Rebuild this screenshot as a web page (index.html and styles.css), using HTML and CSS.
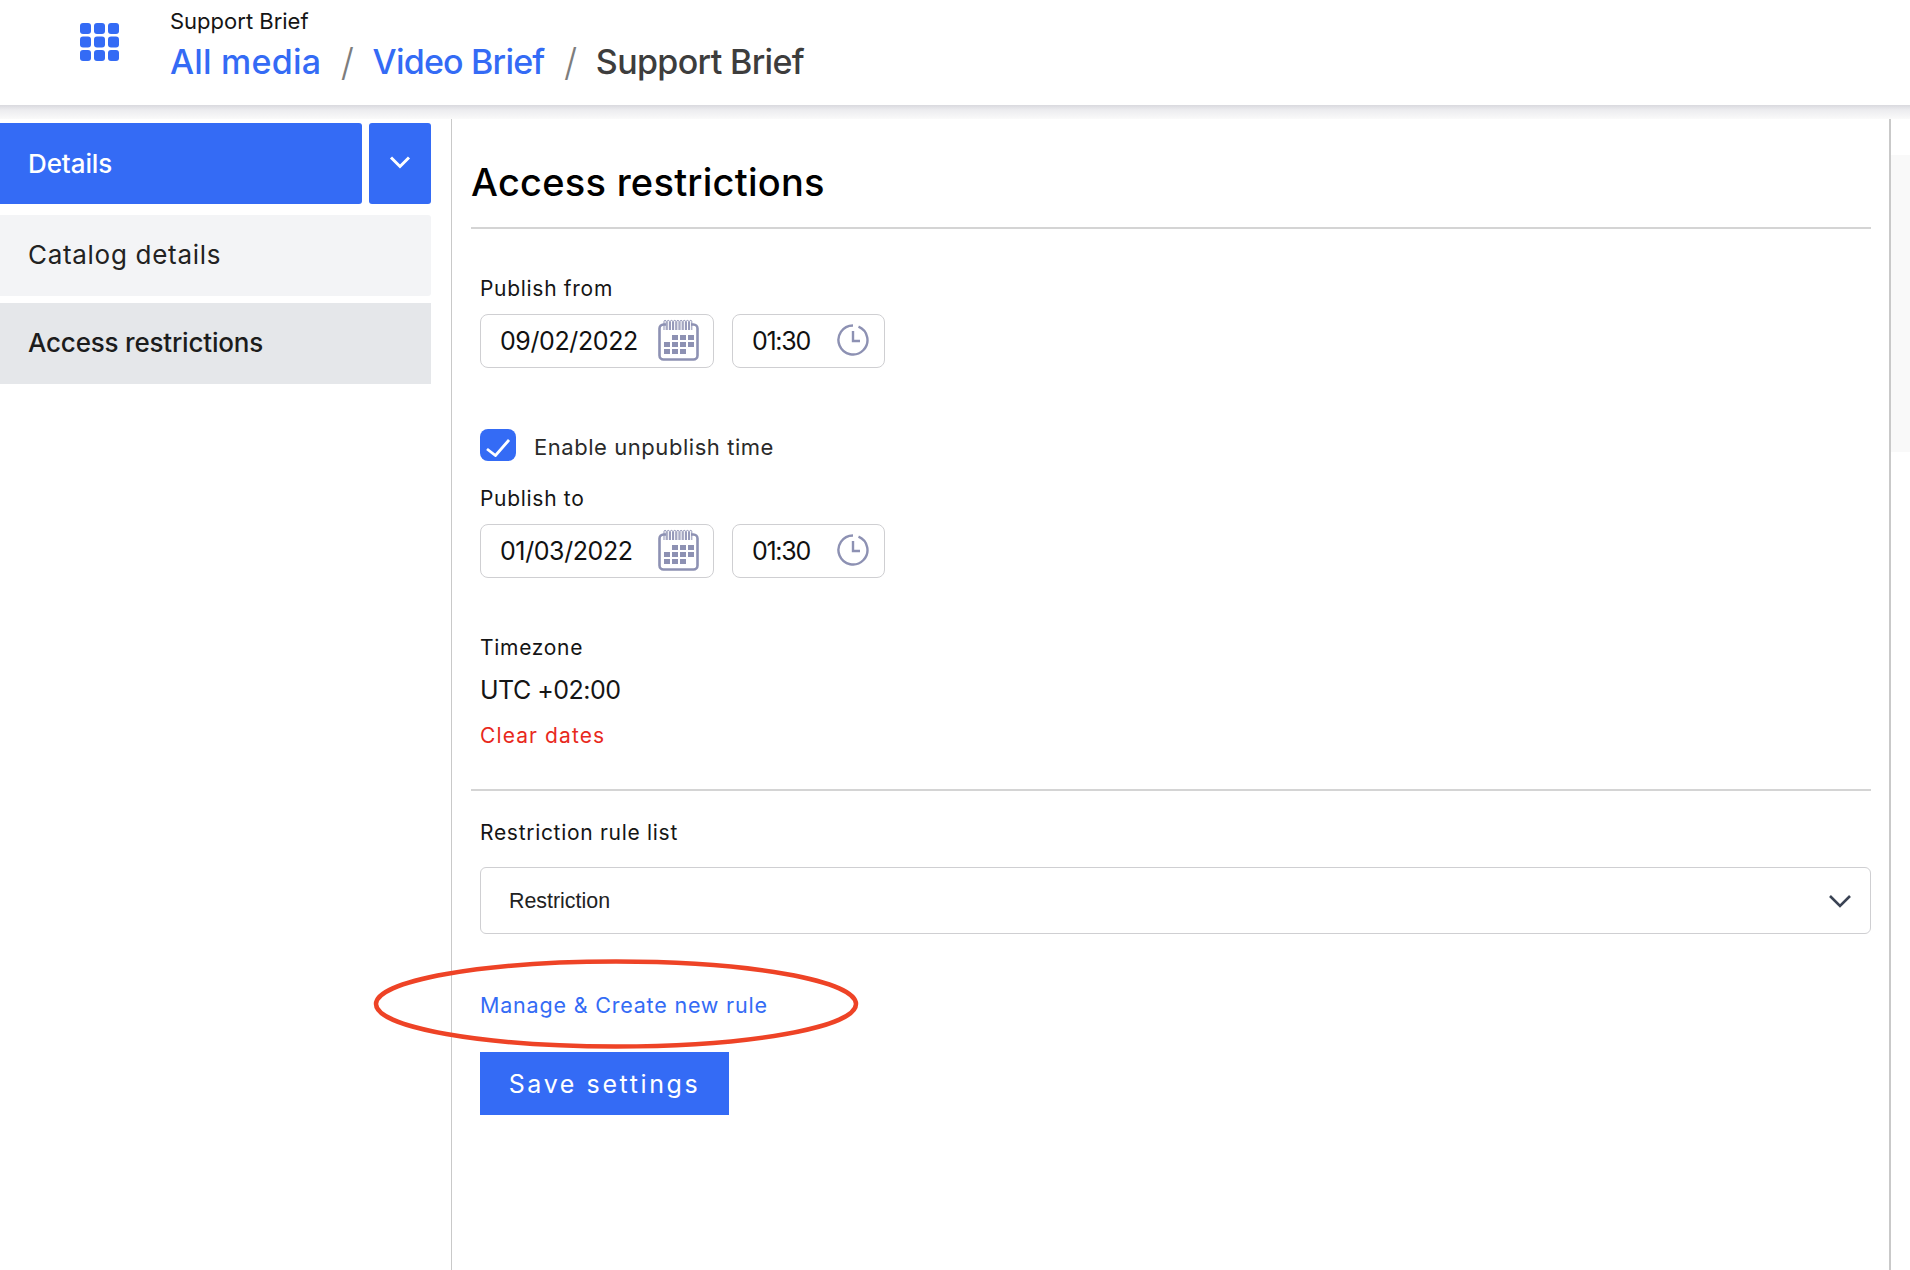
FILE: index.html
```html
<!DOCTYPE html>
<html lang="en">
<head>
<meta charset="utf-8">
<title>Access restrictions</title>
<link rel="stylesheet" href="styles.css">
</head>
<body>
<svg class="defs" width="0" height="0" aria-hidden="true">
  <symbol id="cal" viewBox="0 0 41 42">
    <path d="M8 5.5H5.5a4 4 0 0 0-4 4v27a4 4 0 0 0 4 4h30a4 4 0 0 0 4-4v-27a4 4 0 0 0-4-4H33" fill="none" stroke="#8d91b3" stroke-width="2.6"/>
    <path d="M6 11V2.5a1.1 1.1 0 0 1 2.2 0V11M9.200 11V2.500a1.100 1.100 0 0 1 2.200 0V11M12.400 11V2.500a1.100 1.100 0 0 1 2.200 0V11M15.600 11V2.500a1.100 1.100 0 0 1 2.200 0V11M18.800 11V2.500a1.100 1.100 0 0 1 2.200 0V11M22 11V2.500a1.100 1.100 0 0 1 2.200 0V11M25.200 11V2.500a1.100 1.100 0 0 1 2.200 0V11M28.400 11V2.500a1.100 1.100 0 0 1 2.200 0V11M31.600 11V2.500a1.100 1.100 0 0 1 2.200 0V11" stroke="#8d91b3" stroke-width="1" fill="none"/>
    <g fill="#8d91b3">
      <rect x="14" y="16" width="6" height="5"/><rect x="22" y="16" width="6" height="5"/><rect x="30" y="16" width="6" height="5"/>
      <rect x="6" y="23" width="6" height="5"/><rect x="14" y="23" width="6" height="5"/><rect x="22" y="23" width="6" height="5"/><rect x="30" y="23" width="6" height="5"/>
      <rect x="6" y="30" width="6" height="5"/><rect x="14" y="30" width="6" height="5"/><rect x="22" y="30" width="6" height="5"/>
    </g>
  </symbol>
  <symbol id="clock" viewBox="0 0 32 32">
    <path d="M21.500 2.600A14.500 14.500 0 1 1 16 1.500" fill="none" stroke="#8d91b3" stroke-width="2.4"/>
    <path d="M16 7v10h7" fill="none" stroke="#8d91b3" stroke-width="2.4"/>
  </symbol>
</svg>

<header class="topbar">
  <svg class="apps" viewBox="0 0 39 38" aria-hidden="true">
    <g fill="#346bf5">
      <rect x="0" y="0" width="11" height="11" rx="3"/><rect x="14" y="0" width="11" height="11" rx="3"/><rect x="28" y="0" width="11" height="11" rx="3"/>
      <rect x="0" y="13.500" width="11" height="11" rx="3"/><rect x="14" y="13.500" width="11" height="11" rx="3"/><rect x="28" y="13.500" width="11" height="11" rx="3"/>
      <rect x="0" y="27" width="11" height="11" rx="3"/><rect x="14" y="27" width="11" height="11" rx="3"/><rect x="28" y="27" width="11" height="11" rx="3"/>
    </g>
  </svg>
  <div class="titles">
    <div class="page-name">Support Brief</div>
    <nav class="crumbs">
      <a class="crumb-link crumb-first">All media</a>
      <span class="crumb-sep">/</span>
      <a class="crumb-link">Video Brief</a>
      <span class="crumb-sep">/</span>
      <span class="crumb-current">Support Brief</span>
    </nav>
  </div>
</header>
<div class="shade"></div>

<div class="body-row">
  <aside class="sidebar">
    <div class="side-head">
      <div class="side-main">Details</div>
      <div class="side-toggle">
        <svg width="22" height="14" viewBox="0 0 22 14" aria-hidden="true"><path d="M2 2.500l9 9 9-9" fill="none" stroke="#fff" stroke-width="3"/></svg>
      </div>
    </div>
    <div class="side-item">Catalog details</div>
    <div class="side-item side-item-active">Access restrictions</div>
  </aside>

  <main class="content">
    <h1 class="heading">Access restrictions</h1>
    <section class="dates">
      <label class="label label-from">Publish from</label>
      <div class="field-row">
        <div class="field field-date"><span>09/02/2022</span><svg class="ico-cal"><use href="#cal"/></svg></div>
        <div class="field field-time"><span>01:30</span><svg class="ico-clock"><use href="#clock"/></svg></div>
      </div>
      <div class="check-row">
        <span class="check"><svg width="24" height="24" viewBox="0 0 24 24" aria-hidden="true"><path d="M1 16l8.500 6.500L23 7" fill="none" stroke="#fff" stroke-width="2.800"/></svg></span>
        <span class="check-label">Enable unpublish time</span>
      </div>
      <label class="label label-to">Publish to</label>
      <div class="field-row">
        <div class="field field-date"><span>01/03/2022</span><svg class="ico-cal"><use href="#cal"/></svg></div>
        <div class="field field-time"><span>01:30</span><svg class="ico-clock"><use href="#clock"/></svg></div>
      </div>
      <div class="label label-tz">Timezone</div>
      <div class="tz-value">UTC +02:00</div>
      <a class="clear">Clear dates</a>
    </section>
    <section class="rules">
      <div class="label">Restriction rule list</div>
      <div class="select">
        <span>Restriction</span>
        <svg width="24" height="14" viewBox="0 0 24 14" aria-hidden="true"><path d="M2 2l10 10L22 2" fill="none" stroke="#3a4354" stroke-width="2.600"/></svg>
      </div>
      <a class="manage">Manage &amp; Create new rule</a>
      <button class="save" type="button">Save settings</button>
    </section>
  </main>
  <div class="rail"></div>
</div>

<svg class="circle" viewBox="0 0 486 92" aria-hidden="true"><ellipse cx="243" cy="46" rx="240" ry="42.500" fill="none" stroke="#ee4326" stroke-width="4.500"/></svg>
</body>
</html>
```
FILE: styles.css
```css
* { box-sizing: border-box; }
html, body { margin: 0; height: 1270px; overflow: hidden; background: #fff; }
body { font-family: "Inter", "Liberation Sans", sans-serif; color: #111; position: relative; display: flex; flex-direction: column; }
.defs { position: absolute; }

.topbar { height: 105px; display: flex; align-items: flex-start; padding-left: 80px; background: #fff; flex: none; }
.apps { width: 39px; height: 38px; margin-top: 23px; flex: none; }
.titles { margin-left: 51px; }
.page-name { font-size: 22px; line-height: 26px; margin-top: 8px; letter-spacing: 0; color: #151515; }
.crumbs { display: flex; align-items: center; font-size: 34px; font-weight: 500; line-height: 44px; margin-top: 6px; letter-spacing: -0.8px; }
.crumb-link { color: #346bf5; }
.crumb-first { letter-spacing: 0.2px; }
.crumb-current { color: #3d3d3d; letter-spacing: -0.65px; }
.crumb-sep { color: #7d7d7d; margin: 0 19.5px; font-size: 38px; font-weight: 300; }

.shade { height: 14px; flex: none; background: linear-gradient(#d9d9de, #ececef 35%, #fafafa); }

.body-row { flex: 1; display: flex; min-height: 0; }
.sidebar { width: 431px; flex: none; padding-top: 4px; margin-right: 20px; }
.side-head { display: flex; gap: 7px; margin-bottom: 11px; }
.side-main { width: 362px; height: 81px; background: #346bf5; color: #fff; font-size: 26px; font-weight: 500; letter-spacing: -0.1px; padding-left: 28px; padding-bottom: 1px; display: flex; align-items: center; border-radius: 0 3px 3px 0; }
.side-toggle { width: 62px; height: 81px; background: #346bf5; display: flex; align-items: center; justify-content: center; border-radius: 3px; padding-bottom: 4px; }
.side-item { height: 81px; background: #f3f4f6; font-size: 26px; letter-spacing: 0.7px; padding-left: 28px; padding-bottom: 2px; display: flex; align-items: center; color: #222; margin-bottom: 7px; border-radius: 0 3px 3px 0; }
.side-item-active { background: #e5e7ea; font-weight: 500; letter-spacing: -0.2px; color: #1c1c1c; border-radius: 0; }

.content { width: 1440px; flex: none; border-left: 1px solid #c9c9c9; border-right: 2px solid #c9c9c9; padding: 0 18px 0 19px; }
.heading { margin: 0; height: 110px; border-bottom: 2px solid #d4d4d4; font-size: 38px; font-weight: 500; letter-spacing: 0.25px; line-height: 46px; padding-top: 40px; color: #000; }
.dates { display: flow-root; padding: 0 0 0 9px; height: 562px; border-bottom: 2px solid #d4d4d4; }
.label { display: block; font-size: 21px; line-height: 28px; letter-spacing: 0.7px; color: #151515; }
.label-from { margin-top: 46px; margin-bottom: 11px; }
.field-row { display: flex; gap: 18px; }
.field { height: 54px; border: 1.5px solid #cfcfd2; border-radius: 8px; display: flex; align-items: center; justify-content: space-between; font-size: 25px; letter-spacing: -0.4px; color: #111; padding-left: 19px; }
.field-date { width: 234px; padding-right: 14px; }
.field-time { width: 153px; padding-right: 15px; letter-spacing: -1.3px; }
.ico-cal { width: 41px; height: 42px; flex: none; margin-bottom: 2px; }
.ico-clock { width: 32px; height: 32px; flex: none; margin-bottom: 2px; }
.check-row { display: flex; align-items: center; margin-top: 61px; }
.check { width: 36px; height: 32px; background: #346bf5; border-radius: 8px; display: flex; align-items: center; justify-content: center; }
.check-label { margin-left: 18px; padding-top: 3px; font-size: 22px; letter-spacing: 0.55px; color: #2a2a2a; }
.label-to { margin-top: 24px; margin-bottom: 11px; }
.label-tz { margin-top: 56px; }
.tz-value { font-size: 25px; line-height: 30px; margin-top: 13px; letter-spacing: -0.5px; color: #151515; }
.clear { display: block; color: #e8291c; font-size: 21px; line-height: 28px; margin-top: 17px; letter-spacing: 1.1px; }

.rules { padding: 28px 0 0 9px; }
.select { margin-top: 20px; height: 67px; border: 1.5px solid #cfcfd2; border-radius: 6px; display: flex; align-items: center; justify-content: space-between; padding: 1px 18px 0 28px; font-family: "Liberation Sans", Arial, sans-serif; font-size: 21.4px; color: #222; }
.select svg { margin-top: -1px; }
.manage { display: block; color: #346bf5; font-size: 21.5px; line-height: 28px; margin-top: 57px; letter-spacing: 0.8px; }
.save { display: block; width: 249px; height: 63px; margin-top: 33px; border: 0; background: #346bf5; color: #fff; font-family: inherit; font-size: 25px; letter-spacing: 2.6px; padding: 0; }

.rail { width: 19px; height: 297px; margin-top: 36px; background: #f9f9f9; flex: none; }

.circle { position: absolute; left: 373px; top: 958px; width: 486px; height: 92px; }
```
